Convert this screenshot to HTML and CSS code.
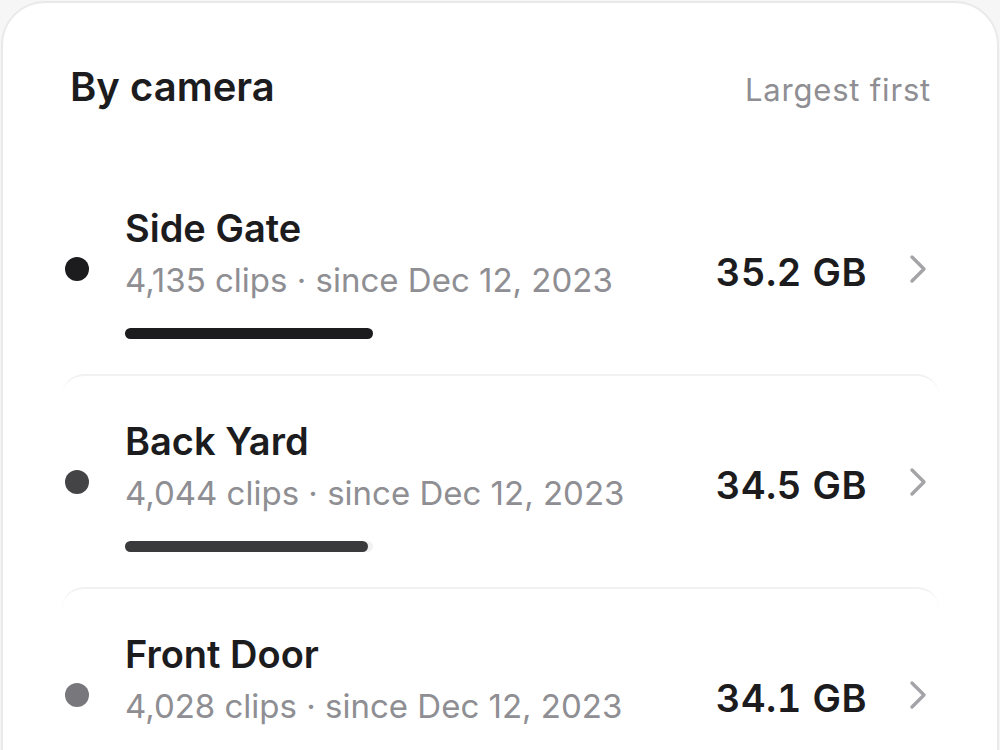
FILE: index.html
```html
<!DOCTYPE html>
<html lang="en">
<head>
    <meta charset="UTF-8">
    <meta name="viewport" content="width=device-width, initial-scale=1.0">
    <title>Storage by camera</title>
    <link rel="stylesheet" href="styles.css">
</head>
<body>
    <div class="card">
        <!-- Header -->
        <div class="card-header">
            <h2>By camera</h2>
            <span class="sort">Largest first</span>
        </div>

        <!-- Camera rows -->
        <ul class="camera-list">
            <li class="camera-row">
                <span class="dot dot-1"></span>
                <div class="camera-info">
                    <div class="camera-name">Side Gate</div>
                    <div class="camera-meta">4,135 clips · since Dec 12, 2023</div>
                    <div class="bar-track"><div class="bar-fill fill-1" style="width: 100%"></div></div>
                </div>
                <span class="camera-size">35.2 GB</span>
                <svg class="chevron" width="20" height="30" viewBox="0 0 20 30"><path d="M3 3 L15 15 L3 27" fill="none" stroke="#a4a4a8" stroke-width="3.4" stroke-linecap="round" stroke-linejoin="round"/></svg>
            </li>
            <li class="camera-row">
                <span class="dot dot-2"></span>
                <div class="camera-info">
                    <div class="camera-name">Back Yard</div>
                    <div class="camera-meta">4,044 clips · since Dec 12, 2023</div>
                    <div class="bar-track"><div class="bar-fill fill-2" style="width: 98%"></div></div>
                </div>
                <span class="camera-size">34.5 GB</span>
                <svg class="chevron" width="20" height="30" viewBox="0 0 20 30"><path d="M3 3 L15 15 L3 27" fill="none" stroke="#a4a4a8" stroke-width="3.4" stroke-linecap="round" stroke-linejoin="round"/></svg>
            </li>
            <li class="camera-row">
                <span class="dot dot-3"></span>
                <div class="camera-info">
                    <div class="camera-name">Front Door</div>
                    <div class="camera-meta">4,028 clips · since Dec 12, 2023</div>
                    <div class="bar-track"><div class="bar-fill fill-3" style="width: 96.9%"></div></div>
                </div>
                <span class="camera-size">34.1 GB</span>
                <svg class="chevron" width="20" height="30" viewBox="0 0 20 30"><path d="M3 3 L15 15 L3 27" fill="none" stroke="#a4a4a8" stroke-width="3.4" stroke-linecap="round" stroke-linejoin="round"/></svg>
            </li>
        </ul>
    </div>
</body>
</html>
```

FILE: styles.css
```css
body {
    margin: 0;
    padding: 1px;
    background: #f6f6f6;
    font-family: Inter, "Noto Sans", sans-serif;
    color: #1c1c1e;
}

.card {
    background: white;
    border: 2px solid #e9e9ea;
    border-radius: 44px;
    min-height: 900px;
    padding: 0 58px 0 59px;
}

.card-header {
    display: flex;
    justify-content: space-between;
    align-items: baseline;
    padding: 60px 8px 0 8px;
    height: 98px;
}

.card-header h2 {
    margin: 0;
    font-size: 40px;
    line-height: 48px;
    font-weight: 600;
}

.sort {
    font-size: 31px;
    color: #8e8e93;
    letter-spacing: 0.8px;
}

.camera-list {
    list-style-type: none;
    margin: 0;
    padding: 0;
}

.camera-row {
    display: flex;
    align-items: center;
    height: 211px;
    border-top: 2px solid #f1f1f2;
    border-radius: 22px;
    padding: 0 10px 0 3px;
}

.camera-row:first-child {
    border-top-color: transparent;
}

.dot {
    width: 24px;
    height: 24px;
    border-radius: 50%;
    flex-shrink: 0;
    margin-right: 36px;
}

.dot-1 { background: #1c1c1e; }
.dot-2 { background: #444446; }
.dot-3 { background: #77777c; }

.camera-info {
    flex: 1;
    padding-top: 8px;
}

.camera-name {
    font-size: 38px;
    line-height: 44px;
    font-weight: 600;
}

.camera-meta {
    font-size: 33px;
    line-height: 40px;
    margin-top: 10px;
    color: #8e8e93;
}

.bar-track {
    width: 248px;
    height: 11px;
    margin-top: 28px;
    border-radius: 6px;
    background: #f2f2f3;
}

.bar-fill {
    height: 100%;
    border-radius: 6px;
}

.fill-1 { background: #1c1c1e; }
.fill-2 { background: #3a3a3c; }
.fill-3 { background: #6c6c70; }

.camera-size {
    font-size: 38px;
    font-weight: 600;
    font-variant-numeric: tabular-nums;
    letter-spacing: 0.5px;
    margin-right: 42px;
    margin-top: 6px;
}

.chevron {
    flex-shrink: 0;
}
```
